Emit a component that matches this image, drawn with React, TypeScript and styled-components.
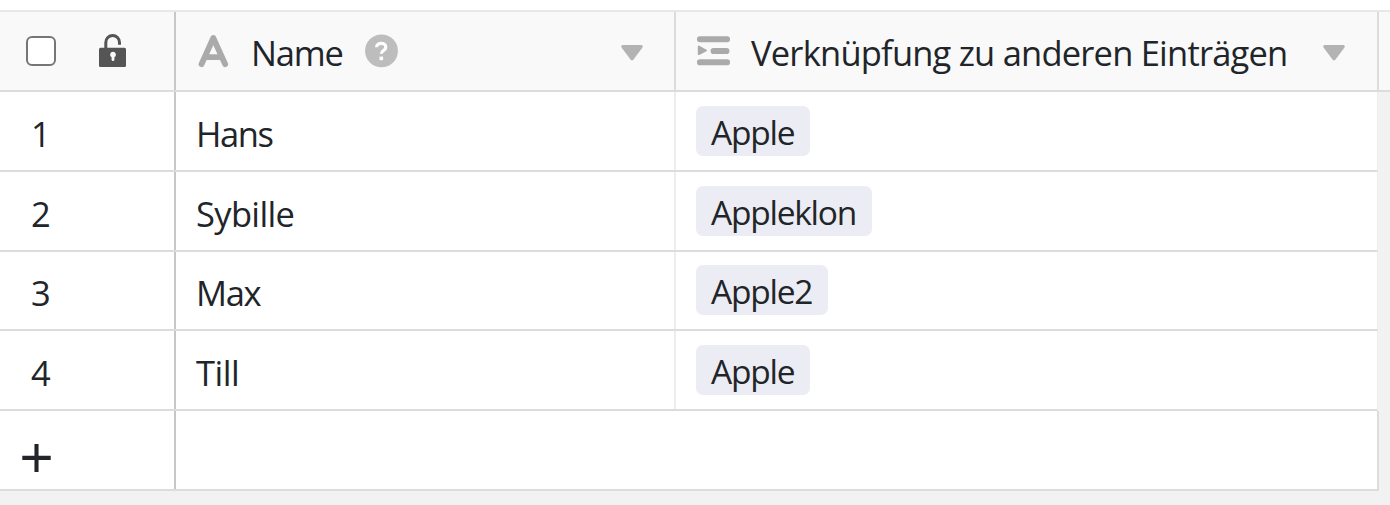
import React from "react";
import styled, { createGlobalStyle } from "styled-components";

const GlobalStyle = createGlobalStyle`
  * { box-sizing: border-box; }
  body { margin: 0; background: #fff; }
`;

const Page = styled.main`
  height: 505px;
  padding-top: 10px;
  overflow: hidden;
  display: flex;
  flex-direction: column;
  color: #212529;
  font-family: "Open Sans", "Noto Sans", sans-serif;
  font-size: 34.5px;
`;

const HeaderRow = styled.div`
  display: flex;
  flex: none;
  height: 82px;
  background: #f9f9f9;
  border-top: 2px solid #e8e8e8;
  border-bottom: 2px solid #dcdcdc;
`;

const Body = styled.div`
  flex: 1;
  background: #f2f2f2;
`;

const Row = styled.div<{ $height: number; $last?: boolean }>`
  display: flex;
  width: ${(p) => (p.$last ? 1379 : 1378)}px;
  height: ${(p) => p.$height}px;
  background: #fff;
  border-bottom: 2px solid #dcdcdc;
  border-right: ${(p) => (p.$last ? "2px solid #dcdcdc" : "1px solid #ededed")};
`;

const IndexCell = styled.div<{ $indent: number; $gap?: number }>`
  width: 176px;
  flex: none;
  display: flex;
  align-items: center;
  gap: ${(p) => p.$gap ?? 0}px;
  padding-left: ${(p) => p.$indent}px;
  border-right: 2px solid #c7c7c7;
`;

const NameCell = styled.div<{ $line: string }>`
  width: 500px;
  flex: none;
  display: flex;
  align-items: center;
  padding-left: 20px;
  border-right: 2px solid ${(p) => p.$line};
`;

const LinkCell = styled.div<{ $top: number }>`
  flex: 1;
  display: flex;
  align-items: flex-start;
  padding: ${(p) => p.$top}px 0 0 20px;
`;

const LinkHeader = styled.div`
  width: 703px;
  flex: none;
  display: flex;
  align-items: center;
  padding-left: 20px;
  border-right: 2px solid #dcdcdc;
`;

const Label = styled.span<{ $spacing?: number; $left?: number; $top?: number }>`
  line-height: 48px;
  white-space: nowrap;
  letter-spacing: ${(p) => p.$spacing ?? 0}px;
  margin-left: ${(p) => p.$left ?? 0}px;
  padding-top: ${(p) => p.$top ?? 3}px;
`;

const Chip = styled.span<{ $width: number }>`
  width: ${(p) => p.$width}px;
  height: 50px;
  padding-left: 15px;
  border-radius: 7px;
  background: #ecedf4;
  font-size: 33.5px;
  line-height: 52px;
  letter-spacing: -1.25px;
  white-space: nowrap;
`;

const Checkbox = styled.span`
  width: 30px;
  height: 30px;
  border: 2px solid #767676;
  border-radius: 6px;
  background: #fff;
`;

const HelpIcon = styled.svg`
  margin-left: 22px;
`;

const Caret = styled.svg<{ $right: number }>`
  margin-left: auto;
  margin-right: ${(p) => p.$right}px;
  margin-top: 4px;
`;

const AddIcon = styled.svg`
  margin-top: 17px;
`;

const LockIcon = () => (
  <svg width="29" height="34" viewBox="0 0 29 34">
    <path d="M7.8 15V8.4a6.85 6.85 0 0 1 13.7 0V10.7" fill="none" stroke="#555" strokeWidth="3" />
    <rect x="1" y="13.8" width="27" height="19.2" rx="1.5" fill="#555" />
    <path d="M15 17.7a3 3 0 0 1 1.4 5.6v2.4a1.4 1.4 0 0 1-2.8 0v-2.4A3 3 0 0 1 15 17.7z" fill="#f9f9f9" />
  </svg>
);

const TextIcon = () => (
  <svg width="34" height="34" viewBox="0 0 34 34">
    <path d="M5.5 30.2L17.3 4 29.2 30.2M10 23.1H25" fill="none" stroke="#aaa" strokeWidth="5.8" strokeLinecap="round" strokeLinejoin="round" />
  </svg>
);

const LinkIcon = () => (
  <svg width="34" height="30" viewBox="0 0 34 30">
    <g fill="#aaa">
      <rect x="1" y="0.3" width="33" height="6" rx="2.8" />
      <rect x="14.6" y="12" width="18.8" height="6" rx="2.8" />
      <rect x="1" y="23.2" width="33" height="6" rx="2.8" />
      <path d="M1.8 10.6q0-1.3 1.5-.9l7.2 4q1 .8 0 1.5l-7.2 3.8q-1.5.4-1.5-.9z" />
    </g>
  </svg>
);

const DropCaret = ({ right }: { right: number }) => (
  <Caret $right={right} width="22" height="16" viewBox="0 0 22 16">
    <path d="M1.5 0h19q2 .5.8 2.8L12.3 14.7q-1.3 1.4-2.6 0L.7 2.8Q-.5.5 1.5 0z" fill="#b3b3b3" />
  </Caret>
);

const rows = [
  { id: 1, name: "Hans", spacing: -1.4, link: "Apple", chip: 114, height: 80 },
  { id: 2, name: "Sybille", spacing: -0.65, link: "Appleklon", chip: 176, height: 80 },
  { id: 3, name: "Max", spacing: -1.3, link: "Apple2", chip: 132, height: 79 },
  { id: 4, name: "Till", spacing: -0.5, link: "Apple", chip: 114, height: 80 },
];

export default function App() {
  return (
    <Page>
      <GlobalStyle />
      <HeaderRow>
        <IndexCell $indent={26} $gap={42}>
          <Checkbox />
          <LockIcon />
        </IndexCell>
        <NameCell $line="#dcdcdc">
          <TextIcon />
          <Label $left={21} $spacing={-1.2}>Name</Label>
          <HelpIcon width="34" height="34" viewBox="0 0 34 34">
            <circle cx="16.5" cy="16.9" r="16.4" fill="#bdbdbd" />
            <path d="M11.6 13.2c0-5.2 9.2-5.2 9.2 0 0 3.2-4.5 3.3-4.5 6.5" fill="none" stroke="#fff" strokeWidth="3.2" />
            <rect x="14.5" y="22.6" width="3.6" height="3.6" fill="#fff" />
          </HelpIcon>
          <DropCaret right={31} />
        </NameCell>
        <LinkHeader>
          <LinkIcon />
          <Label $left={21} $spacing={-0.79}>Verknüpfung zu anderen Einträgen</Label>
          <DropCaret right={32} />
        </LinkHeader>
      </HeaderRow>
      <Body>
        {rows.map((row) => (
          <Row key={row.id} $height={row.height}>
            <IndexCell $indent={31}>
              <Label $top={5}>{row.id}</Label>
            </IndexCell>
            <NameCell $line="#ededed">
              <Label $top={5} $spacing={row.spacing}>{row.name}</Label>
            </NameCell>
            <LinkCell $top={row.height - 66}>
              <Chip $width={row.chip}>{row.link}</Chip>
            </LinkCell>
          </Row>
        ))}
        <Row $height={80} $last>
          <IndexCell $indent={22}>
            <AddIcon width="29" height="29" viewBox="0 0 29 29">
              <path d="M0.3 13.9H28.7M14.5 0V28" stroke="#212529" strokeWidth="4.1" />
            </AddIcon>
          </IndexCell>
        </Row>
      </Body>
    </Page>
  );
}
